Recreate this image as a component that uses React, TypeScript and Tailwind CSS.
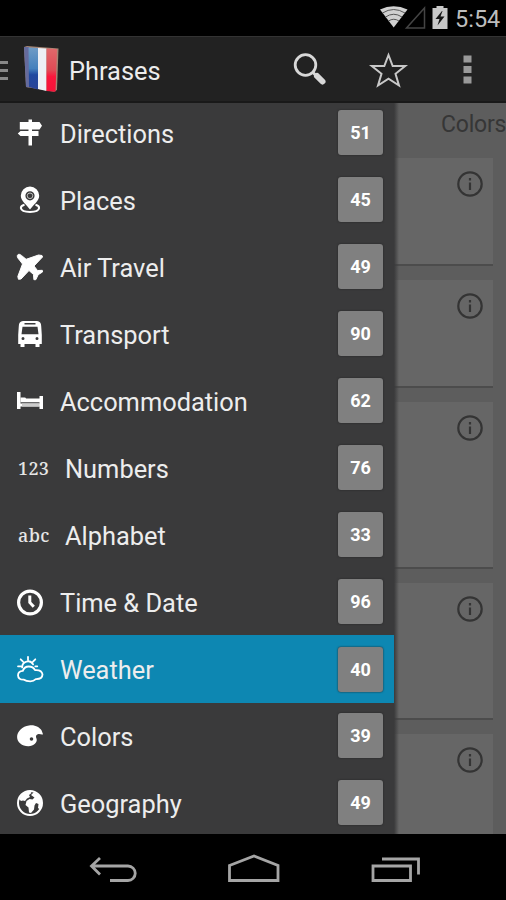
import React from "react";

const items: { label: string; count: number; icon: string }[] = [
  { label: "Directions", count: 51, icon: "sign" },
  { label: "Places", count: 45, icon: "pin" },
  { label: "Air Travel", count: 49, icon: "plane" },
  { label: "Transport", count: 90, icon: "bus" },
  { label: "Accommodation", count: 62, icon: "bed" },
  { label: "Numbers", count: 76, icon: "123" },
  { label: "Alphabet", count: 33, icon: "abc" },
  { label: "Time & Date", count: 96, icon: "clock" },
  { label: "Weather", count: 40, icon: "weather" },
  { label: "Colors", count: 39, icon: "palette" },
  { label: "Geography", count: 49, icon: "globe" },
];

const shapes: Record<string, React.ReactNode> = {
  sign: (
    <path d="M11.500-.5h3.500v2.500h7.500l2.500 3.700-2.500 3.800h-7.500v1.600h6.500v5h-6.500v9.400h-3.500v-9.400H3.500L.8 13.600l2.700-2.500h8V9.500H2.800V2h8.700z" />
  ),
  pin: (
    <>
      <path fillRule="evenodd" d="M13-.5a9.200 9.200 0 0 1 9.200 9.200C22.200 14 16 18 13 22.500 10 18 3.800 14 3.800 8.700A9.200 9.200 0 0 1 13-.5zm0 4.700a4.600 4.600 0 1 0 0 9.200 4.600 4.600 0 0 0 0-9.200z" />
      <circle cx="13" cy="8.800" r="2.800" fill="none" stroke="#bbb" strokeWidth="1" />
      <path d="M7.500 17.800c-2.700.8-3.800 1.900-3.600 3.300.4 2.500 4.300 3.800 9.100 3.800s8.700-1.300 9.100-3.800c.2-1.400-.9-2.500-3.600-3.300" fill="none" stroke="#fff" strokeWidth="2" />
    </>
  ),
  plane: (
    <path stroke="#fff" strokeWidth="1" strokeLinejoin="round" d="M.3 2.200C.2.900 1.300 0 2.700.4c1.200.4 2.300 1.400 3.400 2.400l3 2.500L21.500 1 25 1.500 25.500 3 17 12l3.500 4.500 4.800-.2.200 1.700-4.300 2.700-2.400 5h-1.900l-.4-5.200-4.500-4L4 25 1.500 25.300.8 22.500 5.500 10 2.500 6C1.400 4.900.3 3.400.3 2.200z" />
  ),
  bus: (
    <path fillRule="evenodd" d="M6 0h14q4.200.7 4.200 5l.6 9v9h-2.300v3h-4v-3h-11v3h-4v-3H1.200v-9l.6-9Q1.800.7 6 0zm1.500 2v1.500h11V2zM5.500 5.800 4.500 13.300h17L20.500 5.800zM6 16a1.500 1.500 0 1 0 0 3 1.500 1.500 0 0 0 0-3zm14 0a1.500 1.500 0 1 0 0 3 1.500 1.500 0 0 0 0-3z" />
  ),
  bed: (
    <>
      <path d="M0 4h3.500v11.500h19V8H26v13h-3.500v-2.500h-19V21H0z" />
      <path d="M3.500 9.500h4q1.500 0 1.500 1h14v3.800H3.500z" />
      <path d="M5 15.500h17.500v3H5z" fill="#ccc" />
    </>
  ),
  clock: (
    <>
      <circle cx="13" cy="13.500" r="11.400" fill="none" stroke="#fff" strokeWidth="3.200" />
      <path d="M12.800 6.500v7l4 4.300" fill="none" stroke="#fff" strokeWidth="3" />
    </>
  ),
  weather: (
    <g fill="none" stroke="#fff" strokeWidth="1.800" strokeLinecap="round" strokeLinejoin="round">
      <path d="M11 .8v3.200M3.700 3.300 6 5.600M18.300 3.300 16 5.600M1 10.300h2.800M18.300 10.300h2M5.200 11.400a5.800 5.800 0 0 1 10.900-3" />
      <path d="M7 23.700q-5.800.2-6-4.500.2-4 4.800-4.300 1.400-4.300 6-4.400 4.300 0 6.200 3.600 6.800-.6 7.500 4.300-.2 4.900-6.700 4.700-2.200 2.200-5.500 2.200-4.300 0-6.300-1.600z" />
    </g>
  ),
  palette: (
    <path fillRule="evenodd" d="M12 2.500C18 1.500 22.500 4.500 24.500 7.200l1.500 4c-1 .8-3-.4-5 0-2.500.6-2.200 2.400-1.500 4.400C21 19.500 16.500 23 11.500 23.200 5 23.300.2 19.400.1 14 0 8.500 5.500 3.200 12 2.500zm2.500 11.700a1.800 1.800 0 1 0 0 3.600 1.800 1.800 0 0 0 0-3.600z" />
  ),
  globe: (
    <>
      <circle cx="13" cy="13" r="12" fill="none" stroke="#fff" strokeWidth="2" />
      <path d="M2 9 6 3l7-2 1.500 2-2.500 2 1 2-3 1.500-2 2.500-2-.5L4 11zM14 5l3-3 6 4 2 7-2 6.500-2-1.500.5-4-2.500-1-1.500 2.500-.5 4-3 3.500-2-.5-.5-5-3-2.500 1-4 3-2 3 .5 2-2z" />
    </>
  ),
};

function RowIcon({ name }: { name: string }) {
  if (name === "123" || name === "abc") {
    return (
      <span className="w-[48px] shrink-0 pl-px font-['Noto_Serif','DejaVu_Serif',serif] text-[18px] font-medium leading-none text-[#e6e6e6]">
        <span className={name === "123" ? "tracking-[0.3px]" : "tracking-[0.4px]"}>{name}</span>
      </span>
    );
  }
  return (
    <svg className="mr-[17px] h-[26px] w-[26px] shrink-0 overflow-visible" viewBox="0 0 26 26" fill="#fff">
      {shapes[name]}
    </svg>
  );
}

function Card({ className }: { className: string }) {
  return (
    <div className={"mr-[13px] flex shrink-0 justify-end border-b-2 border-[#4c4c4c] bg-[#666] pr-[9px] pt-[12px] " + className}>
      <svg className="h-[28px] w-[28px]" viewBox="0 0 28 28" fill="none" stroke="#343434" strokeWidth="2.200">
        <circle cx="14" cy="14" r="11.700" />
        <path d="M14 12.500v7.500M14 8v2.500" />
      </svg>
    </div>
  );
}

export default function App() {
  return (
    <div className="flex h-[900px] w-[506px] flex-col overflow-hidden bg-black font-['Roboto',sans-serif]">
      <div className="flex h-[36px] shrink-0 items-center justify-end pr-[8px] text-[#bdbdbd]">
        <svg className="h-[36px] w-[72px]" viewBox="0 0 72 36">
          <path d="M0 9.500Q13.500 3 27.500 9.500L13.700 27.500z" fill="#d0d0d0" />
          <path d="M2.500 13Q13.700 6 25 13M5.500 17Q13.700 11.500 22 17M8.500 21Q13.700 17.500 19 21" fill="none" stroke="#555" strokeWidth="1" />
          <path d="M44.500 8v20H26.500z" fill="none" stroke="#444" strokeWidth="1.500" />
          <path d="M52.500 8h4V6h7v2h4v21h-15z" fill="#c8c8c8" />
          <path d="m62 11-6.500 8h4l-2 6.500 7-9h-4l2-5.500z" fill="#151515" />
        </svg>
        <span className="ml-[3px] w-[43px] whitespace-nowrap pt-[3px] text-[23.500px]">5:54</span>
      </div>
      <header className="flex h-[67px] shrink-0 items-center border-b-2 border-t border-b-[#191919] border-t-[#333] bg-[#222]">
        <div className="mt-[3px] flex w-[8px] flex-col gap-[5px]">
          <i className="h-[3px] bg-[#888]" />
          <i className="h-[3px] bg-[#888]" />
          <i className="h-[3px] bg-[#888]" />
        </div>
        <svg className="ml-[14px] h-[48px] w-[38px]" viewBox="0 0 38 48">
          <defs>
            <linearGradient id="blue" x1="0" y1="0" x2="0" y2="1">
              <stop offset="0" stopColor="#6f9bc5" /><stop offset=".5" stopColor="#4481bd" /><stop offset=".65" stopColor="#1f48a0" /><stop offset="1" stopColor="#2a4497" />
            </linearGradient>
            <linearGradient id="red" x1="0" y1="0" x2="0" y2="1">
              <stop offset="0" stopColor="#e0696b" /><stop offset=".5" stopColor="#e04a55" /><stop offset=".65" stopColor="#fa173c" /><stop offset="1" stopColor="#f51339" />
            </linearGradient>
          </defs>
          <path d="M2 2 5 1 36.500 3.500 35 45 32 46.800 4 42z" fill="#a58574" />
          <path d="M2 2 7 2v40.500L4 42z" fill="#656b9d" />
          <path d="M6.500 2.500 16 3v41.500L7 42z" fill="url(#blue)" />
          <path d="M16 3l8.500.5V46L16 44z" fill="#edf0f5" />
          <path d="M24.500 3.500 35 4 33.500 46.800 24.500 46z" fill="url(#red)" />
        </svg>
        <h1 className="ml-[9px] flex-1 pt-[4px] text-[25.400px] text-[#ececec]">Phrases</h1>
        <svg className="mt-px h-[40px] w-[214px]" viewBox="292 50 214 40" fill="none">
          <circle cx="305.500" cy="65" r="10.300" stroke="#d8d8d8" strokeWidth="2.800" />
          <path d="m312.500 72 3 3" stroke="#d8d8d8" strokeWidth="3" />
          <path d="m317 76 5.500 5.500" stroke="#d8d8d8" strokeWidth="6" strokeLinecap="round" />
          <path d="M388.500 55l4.200 11h12.500l-9.700 7.800 3.500 11.700-10.500-6.800-10.500 6.800 3.500-11.700-9.700-7.800h12.500z" stroke="#c8c8c8" strokeWidth="2" />
          <path d="M463.500 55.500h8v7h-8zM463.500 66h8v7h-8zM463.500 76.500h8v7h-8z" fill="#999" />
        </svg>
      </header>
      <main className="flex h-[731px] shrink-0 overflow-hidden bg-[#3a3a3b]">
        <nav className="w-[394px] shrink-0 overflow-hidden">
          <ul className="-mt-[4px]">
            {items.map((it) => (
              <li
                key={it.label}
                className={"flex items-center pl-[17px] pr-[11px] " + (it.label === "Weather" ? "-mb-px h-[68px] bg-[#0d87b2]" : "h-[67px]")}
              >
                <RowIcon name={it.icon} />
                <span className="flex-1 whitespace-nowrap pt-[3px] text-[25.400px] text-[#ededed]">{it.label}</span>
                <span className="flex h-[45px] w-[45px] items-center justify-center rounded-[3px] bg-[#808080] text-[18px] font-bold text-white shadow-[0_0_2px_#222]">
                  {it.count}
                </span>
              </li>
            ))}
          </ul>
        </nav>
        <section className="relative flex flex-1 flex-col overflow-hidden bg-[#5d5d5d]">
          <div className="h-[55px] shrink-0 whitespace-nowrap pl-[47px] pt-[5px] text-[23px] tracking-[-0.2px] text-[#363636]">Colors</div>
          <Card className="mb-[14px] h-[108px]" />
          <Card className="mb-[14px] h-[108px]" />
          <Card className="mb-[14px] h-[167px]" />
          <Card className="mb-[14px] h-[137px]" />
          <Card className="h-[120px]" />
          <div className="absolute inset-y-0 left-0 w-[5px] bg-gradient-to-r from-[#3a3a3b] to-transparent" />
        </section>
      </main>
      <footer className="flex h-[66px] shrink-0 items-center justify-center">
        <svg className="h-[66px] w-[370px]" viewBox="68 833 370 66" fill="none" stroke="#a5a5a5" strokeWidth="2.800">
          <path d="M100 857l-8.500 8 8.500 8.500M92 865h36a7.200 7.200 0 0 1 0 14.500h-18" />
          <path d="M229.500 864.500 254 855l24 9.500v15h-48.500z" />
          <path d="M373 865h37.500v14.500H373zM382 858h36.500v15.500" />
        </svg>
      </footer>
    </div>
  );
}
